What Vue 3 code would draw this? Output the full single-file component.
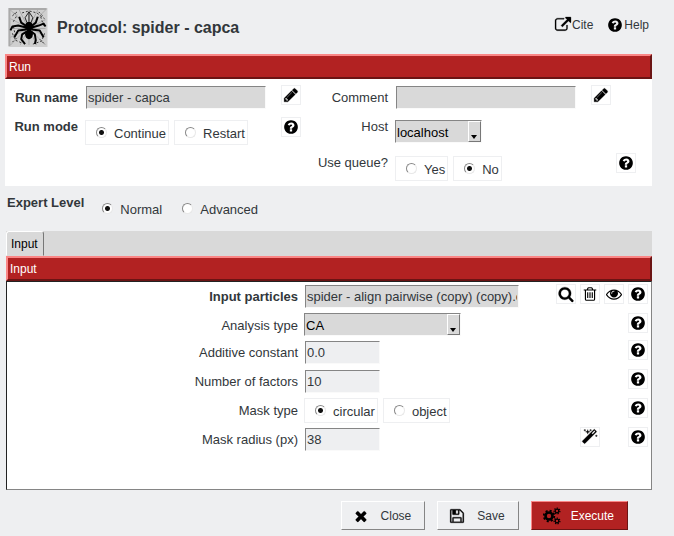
<script setup>
import { ref, reactive } from 'vue'

const icons = {
  help: 'M1024 1376v-192q0-14-9-23t-23-9h-192q-14 0-23 9t-9 23v192q0 14 9 23t23 9h192q14 0 23-9t9-23zm256-672q0-88-55.5-163t-138.5-116-170-41q-243 0-371 213-15 24 8 42l132 100q7 6 19 6 16 0 25-12 53-68 86-92 34-24 86-24 48 0 85.5 26t37.5 59q0 38-20 61t-68 45q-63 28-115.5 86.5t-52.5 125.5v36q0 14 9 23t23 9h192q14 0 23-9t9-23q0-19 21.5-49.5t54.5-49.5q32-18 49-28.5t46-35 44.5-48 28-60.5 12.5-81zm384 192q0 209-103 385.5t-279.5 279.5-385.5 103-385.5-103-279.5-279.5-103-385.5 103-385.5 279.5-279.5 385.5-103 385.5 103 279.5 279.5 103 385.5z',
  search: 'M1216 832q0-185-131.500-316.500t-316.500-131.500-316.500 131.500-131.500 316.500 131.500 316.500 316.500 131.500 316.500-131.500 131.500-316.500zm512 832q0 52-38 90t-90 38q-54 0-90-38l-343-342q-179 124-399 124-143 0-273.500-55.500t-225-150-150-225-55.500-273.500 55.500-273.500 150-225 225-150 273.500-55.500 273.500 55.500 225 150 150 225 55.500 273.500q0 220-124 399l343 343q37 37 37 90z',
  trash: 'M704 736v576q0 14-9 23t-23 9h-64q-14 0-23-9t-9-23v-576q0-14 9-23t23-9h64q14 0 23 9t9 23zm256 0v576q0 14-9 23t-23 9h-64q-14 0-23-9t-9-23v-576q0-14 9-23t23-9h64q14 0 23 9t9 23zm256 0v576q0 14-9 23t-23 9h-64q-14 0-23-9t-9-23v-576q0-14 9-23t23-9h64q14 0 23 9t9 23zm128 724v-948h-896v948q0 22 7 40.500t14.500 27 10.500 8.500h832q3 0 10.500-8.500t14.500-27 7-40.500zm-672-1076h448l-48-117q-7-9-17-11h-317q-10 2-17 11zm928 32v64q0 14-9 23t-23 9h-96v948q0 83-47 143.500t-113 60.500h-832q-66 0-113-58.500t-47-141.500v-952h-96q-14 0-23-9t-9-23v-64q0-14 9-23t23-9h309l70-167q15-37 54-63t79-26h320q40 0 79 26t54 63l70 167h309q14 0 23 9t9 23z',
  eye: 'M1664 960q-152-236-381-353 61 104 61 225 0 185-131.500 316.500t-316.500 131.500-316.500-131.500-131.500-316.500q0-121 61-225-229 117-381 353 133 205 333.500 326.500t434.500 121.500 434.500-121.500 333.500-326.500zm-720-384q0-20-14-34t-34-14q-125 0-214.500 89.500t-89.500 214.500q0 20 14 34t34 14 34-14 14-34q0-86 61-147t147-61q20 0 34-14t14-34zm848 384q0 34-20 69-140 230-376.500 368.500t-499.500 138.500-499.500-139-376.500-368q-20-35-20-69t20-69q140-229 376.500-368t499.500-139 499.500 139 376.500 368q20 35 20 69z',
  pencil: 'M491 1536l91-91-235-235-91 91v107h128v128h107zm523-928q0-22-22-22-10 0-17 7l-542 542q-7 7-7 17 0 22 22 22 10 0 17-7l542-542q7-7 7-17zm-54-192l416 416-832 832h-416v-416zm683 96q0 53-37 90l-166 166-416-416 166-165q36-38 90-38 53 0 91 38l235 234q37 39 37 91z',
  magic: 'M1190 581l293-293-107-107-293 293zm447-293q0 27-18 45l-1286 1286q-18 18-45 18t-45-18l-198-198q-18-18-18-45t18-45l1286-1286q18-18 45-18t45 18l198 198q18 18 18 45zM353 98l98 30-98 30-30 98-30-98-98-30 98-30 30-98zM703 260l196 60-196 60-60 196-60-196-196-60 196-60 60-196zM1633 738l98 30-98 30-30 98-30-98-98-30 98-30 30-98zM993 98l98 30-98 30-30 98-30-98-98-30 98-30 30-98z',
  close: 'M1490 1322q0 40-28 68l-136 136q-28 28-68 28t-68-28l-294-294-294 294q-28 28-68 28t-68-28l-136-136q-28-28-28-68t28-68l294-294-294-294q-28-28-28-68t28-68l136-136q28-28 68-28t68 28l294 294 294-294q28-28 68-28t68 28l136 136q28 28 28 68t-28 68l-294 294 294 294q28 28 28 68z',
  save: 'M512 1536h768v-384h-768v384zm896 0h128v-896q0-14-10-38.500t-20-34.500l-281-281q-10-10-34-20t-39-10v416q0 40-28 68t-68 28h-576q-40 0-68-28t-28-68v-416h-128v1280h128v-416q0-40 28-68t68-28h832q40 0 68 28t28 68v416zm-384-928v-320q0-13-9.500-22.500t-22.500-9.500h-192q-13 0-22.500 9.500t-9.500 22.500v320q0 13 9.500 22.500t22.500 9.500h192q13 0 22.500-9.500t9.500-22.500zm640 32v928q0 40-28 68t-68 28h-1344q-40 0-68-28t-28-68v-1344q0-40 28-68t68-28h928q40 0 88 20t76 48l280 280q28 28 48 76t20 88z',
  link: 'M1408 928v320q0 119-84.500 203.500t-203.500 84.500h-832q-119 0-203.500-84.500t-84.500-203.500v-832q0-119 84.500-203.500t203.500-84.500h704q14 0 23 9t9 23v64q0 14-9 23t-23 9h-704q-66 0-113 47t-47 113v832q0 66 47 113t113 47h832q66 0 113-47t47-113v-320q0-14 9-23t23-9h64q14 0 23 9t9 23zm384-864v512q0 26-19 45t-45 19-45-19l-176-176-652 652q-10 10-23 10t-23-10l-114-114q-10-10-10-23t10-23l652-652-176-176q-19-19-19-45t19-45 45-19h512q26 0 45 19t19 45z',
}

const runName = ref('spider - capca')
const comment = ref('')
const runMode = ref('Continue')
const queue = ref('No')
const level = ref('Normal')

const params = reactive([
  { id: 'particles', label: 'Input particles', type: 'pointer', value: 'spider - align pairwise (copy) (copy).outputParticles', actions: ['search', 'trash', 'eye', 'help'] },
  { id: 'analysis', label: 'Analysis type', type: 'select', value: 'CA', options: ['CA', 'PCA', 'IPCA'], actions: ['help'] },
  { id: 'constant', label: 'Additive constant', type: 'number', value: '0.0', actions: ['help'] },
  { id: 'factors', label: 'Number of factors', type: 'number', value: '10', actions: ['help'] },
  { id: 'mask', label: 'Mask type', type: 'radio', value: 'circular', options: ['circular', 'object'], actions: ['help'] },
  { id: 'radius', label: 'Mask radius (px)', type: 'number', value: '38', actions: ['magic', 'help'] },
])
</script>

<template>
  <main class="window">
    <header class="top">
      <svg class="logo" viewBox="0 0 40 40" aria-hidden="true">
        <rect width="40" height="40" fill="#cfcfcf" />
        <path d="M1 39V1H39" fill="none" stroke="#aaa" stroke-width="2" />
        <path class="web" d="M2 2L38 38M38 2L2 38M21 2V38M2 21H38M11 2L29 38M30 2L12 38M2 11L38 29M2 30L38 12" />
        <path class="web strong" d="M4 8L10 3M14 5L21 3L29 5L37 11M5 14L9 7M33 9L36 18M4 26L7 33L14 36M25 37L34 34L37 26M5 19L7 28M6 5L9 8M31 4L35 8M4 35L9 30M32 32L37 37" />
        <path class="legs" d="M19 19L13 15L11 9M18 20L10 18L4 19L2 23M18 22L10 23L6 30M19 24L14 27L13 32L17 37M23 19L28 15L30 9M24 20L31 18L36 16L38 19M24 22L32 23L36 30M23 24L27 27L28 33L27 37" />
        <path class="feelers" d="M19 15L17 10L21 4L25 10L23 15M21 4V14" />
        <ellipse cx="21" cy="27" rx="4" ry="5" />
        <ellipse cx="21" cy="19" rx="4" ry="5" />
      </svg>
      <h1>Protocol: spider - capca</h1>
      <nav class="links">
        <a href="#cite"><svg class="icon heavy" viewBox="0 0 1792 1792"><path :d="icons.link" /></svg>Cite</a>
        <a href="#help"><svg class="icon" viewBox="0 0 1792 1792"><path :d="icons.help" /></svg>Help</a>
      </nav>
    </header>

    <section class="run">
      <h2 class="bar">Run</h2>
      <div class="run-grid">
        <label class="label bold tall" for="run-name">Run name</label>
        <input id="run-name" v-model="runName" class="field grey" type="text">
        <div class="tools">
          <button class="tool" type="button" aria-label="Edit run name"><svg class="icon heavy" viewBox="0 0 1792 1792"><path :d="icons.pencil" /></svg></button>
        </div>
        <label class="label tall" for="comment">Comment</label>
        <input id="comment" v-model="comment" class="field grey" type="text">
        <div class="tools">
          <button class="tool" type="button" aria-label="Edit comment"><svg class="icon heavy" viewBox="0 0 1792 1792"><path :d="icons.pencil" /></svg></button>
          <span class="blank"></span>
        </div>

        <span id="run-mode" class="label bold">Run mode</span>
        <div class="radios drop" role="radiogroup" aria-labelledby="run-mode">
          <label v-for="o in ['Continue', 'Restart']" :key="o" class="radio"><input v-model="runMode" type="radio" name="mode" :value="o">{{ o }}</label>
        </div>
        <div class="tools">
          <button class="tool" type="button" aria-label="Run mode help"><svg class="icon" viewBox="0 0 1792 1792"><path :d="icons.help" /></svg></button>
        </div>
        <label class="label" for="host">Host</label>
        <div class="combo host drop">
          <select id="host"><option>localhost</option></select>
          <span class="arrow"></span>
        </div>
        <span></span>

        <span id="use-queue" class="label queue">Use queue?</span>
        <div class="radios drop" role="radiogroup" aria-labelledby="use-queue">
          <label v-for="o in ['Yes', 'No']" :key="o" class="radio"><input v-model="queue" type="radio" name="queue" :value="o">{{ o }}</label>
        </div>
        <div class="tools">
          <button class="tool" type="button" aria-label="Queue help"><svg class="icon" viewBox="0 0 1792 1792"><path :d="icons.help" /></svg></button>
        </div>
      </div>
    </section>

    <div class="level">
      <span id="level" class="label bold">Expert Level</span>
      <div class="radios plain" role="radiogroup" aria-labelledby="level">
        <label v-for="o in ['Normal', 'Advanced']" :key="o" class="radio"><input v-model="level" type="radio" name="level" :value="o">{{ o }}</label>
      </div>
    </div>

    <section class="params">
      <div class="tabs" role="tablist"><button class="tab" type="button" role="tab" aria-selected="true">Input</button></div>
      <h2 class="bar">Input</h2>
      <div class="panel">
        <div v-for="p in params" :key="p.id" class="row">
          <span v-if="p.type === 'radio'" :id="p.id" class="label tall">{{ p.label }}</span>
          <label v-else class="label tall" :class="{ bold: p.type === 'pointer' }" :for="p.id">{{ p.label }}</label>

          <div v-if="p.type === 'select'" class="combo analysis">
            <select :id="p.id" v-model="p.value"><option v-for="o in p.options" :key="o">{{ o }}</option></select>
            <span class="arrow"></span>
          </div>
          <div v-else-if="p.type === 'radio'" class="radios" role="radiogroup" :aria-labelledby="p.id">
            <label v-for="o in p.options" :key="o" class="radio"><input v-model="p.value" type="radio" :name="p.id" :value="o">{{ o }}</label>
          </div>
          <input v-else :id="p.id" v-model="p.value" class="field" :class="p.type === 'pointer' ? 'grey long' : 'short'" type="text">

          <div class="slots">
            <button v-for="a in p.actions" :key="a" class="tool" :class="'at-' + a" type="button" :aria-label="p.label + ' ' + a">
              <svg class="icon" :class="{ heavy: a === 'search' || a === 'magic' }" viewBox="0 0 1792 1792"><path :d="icons[a]" /></svg>
            </button>
          </div>
        </div>
      </div>
    </section>

    <footer class="buttons">
      <button class="btn" type="button"><svg class="icon heavy" viewBox="0 0 1792 1792"><path :d="icons.close" /></svg>Close</button>
      <button class="btn" type="button"><svg class="icon heavy" viewBox="0 0 1792 1792"><path :d="icons.save" /></svg>Save</button>
      <button class="btn primary" type="button">
        <svg class="icon cogs" viewBox="0 0 18 18">
          <g fill="none" stroke="#000">
            <circle cx="6" cy="9" r="3.500" stroke-width="2.600" />
            <circle cx="6" cy="9" r="5.300" stroke-width="1.800" stroke-dasharray="2.080 2.080" />
            <circle cx="14" cy="4" r="1.800" stroke-width="1.300" />
            <circle cx="14" cy="4" r="2.900" stroke-width="1.200" stroke-dasharray="1.300 1.300" />
            <circle cx="14" cy="14" r="1.800" stroke-width="1.300" />
            <circle cx="14" cy="14" r="2.900" stroke-width="1.200" stroke-dasharray="1.300 1.300" />
          </g>
        </svg>Execute
      </button>
    </footer>
  </main>
</template>

<style>
body {
  background: #eeeff1;
}
</style>

<style scoped>
.window {
  box-sizing: border-box;
  padding: 8px 22px 6px 5px;
  color: #32373b;
  font: 13px/20px "Liberation Sans", Arial, sans-serif;
}
button,
input,
select {
  box-sizing: border-box;
  margin: 0;
  font: inherit;
  color: inherit;
}
.icon {
  width: 16px;
  height: 16px;
  flex: none;
  fill: #000;
}
.heavy {
  overflow: visible;
  stroke: #000;
  stroke-width: 30;
}
.top {
  display: flex;
  align-items: flex-start;
  height: 46px;
  padding-left: 3px;
}
.logo {
  width: 40px;
  height: 39px;
}
.web {
  fill: none;
  stroke: #888;
  stroke-width: 0.5;
}
.strong {
  stroke: #333;
  stroke-width: 1;
  stroke-dasharray: 2 2;
}
.legs {
  fill: none;
  stroke: #000;
  stroke-width: 2;
  stroke-linejoin: round;
}
.feelers {
  fill: none;
  stroke: #222;
  stroke-width: 1;
}
h1 {
  flex: 1;
  margin: 0 0 0 9px;
  font-size: 16px;
  line-height: 39px;
}
.links {
  display: flex;
  gap: 14px;
  padding: 7px 3px 0 0;
  font-size: 12px;
}
.links a {
  display: flex;
  align-items: center;
  gap: 1px;
  color: inherit;
  text-decoration: none;
}
.bar {
  box-sizing: border-box;
  height: 25px;
  margin: 0;
  padding: 0 2px;
  border: 2px solid;
  border-color: #fa8686 #6b1414 #6b1414 #fa8686;
  background: #b22222;
  color: #fff;
  font-size: 12px;
  font-weight: 400;
  line-height: 22px;
}
.run-grid {
  display: grid;
  grid-template-columns: 73px 1fr 27px 79px 1fr 52px;
  column-gap: 8px;
  row-gap: 8px;
  align-items: start;
  padding: 6px 16px 5px 0;
  background: #fff;
}
.label {
  text-align: right;
  white-space: nowrap;
}
.bold {
  font-weight: 700;
}
.tall {
  line-height: 25px;
}
.run-grid .tall {
  margin-bottom: -1px;
}
.queue {
  grid-column: 4;
}
.drop {
  margin-top: 3px;
}
.field {
  height: 23px;
  width: 100%;
  margin-top: 1px;
  padding: 0 1px;
  border: 1px solid;
  border-color: #858585 #fafafa #fafafa #858585;
  border-radius: 0;
  background: #eeeff1;
}
.grey {
  background: #d9d9d9;
}
.long {
  max-width: 214px;
}
.short {
  max-width: 75px;
}
.tools {
  display: flex;
  justify-content: flex-end;
  gap: 5px;
}
.blank {
  width: 20px;
}
.tool {
  display: flex;
  align-items: center;
  justify-content: center;
  width: 20px;
  height: 20px;
  padding: 0;
  border: 1px solid #eeeff1;
  background: #fff;
}
.radios {
  display: flex;
  gap: 5px;
  margin-left: -1px;
}
.radio {
  box-sizing: border-box;
  display: flex;
  align-items: center;
  height: 25px;
  padding: 3px 2px 0 10px;
  border: 1px solid #eeeff1;
}
.radio input {
  appearance: none;
  width: 11px;
  height: 11px;
  margin: 0 7px 4px 0;
  border: 1px solid;
  border-color: #888 #e8e8e8 #e8e8e8 #888;
  border-radius: 50%;
  background: #fff;
}
.radio input:checked {
  background: radial-gradient(circle, #111 2px, #fff 3px);
}
.combo {
  position: relative;
  height: 23px;
  margin-left: -1px;
}
.combo select {
  display: block;
  width: 100%;
  height: 100%;
  padding: 2px 16px 0 1px;
  appearance: none;
  border: 1px solid;
  border-color: #858585 #fafafa #fafafa #858585;
  border-radius: 0;
  background: #d9d9d9;
  color: #000;
}
.host {
  width: 87px;
}
.analysis {
  width: 157px;
}
.arrow {
  position: absolute;
  top: 1px;
  right: 1px;
  bottom: 1px;
  box-sizing: border-box;
  width: 13px;
  border: 1px solid;
  border-color: #fff #777 #777 #fff;
  background: #d9d9d9;
  pointer-events: none;
}
.arrow::after {
  content: "";
  position: absolute;
  bottom: 2px;
  left: 2px;
  border: 3px solid transparent;
  border-top: 4px solid #000;
  border-bottom: 0;
}
.level {
  display: flex;
  padding: 7px 2px 0;
  height: 38px;
}
.plain {
  gap: 0;
  margin: 3px 0 0 7px;
}
.plain .radio {
  border-color: transparent;
  padding-right: 8px;
}
.params {
  margin-left: 1px;
}
.tabs {
  display: flex;
  height: 25px;
  background: #d9d9d9;
}
.tab {
  padding: 0 5px 0 4px;
  border: 1px solid;
  border-color: #fff #777 transparent #fff;
  border-radius: 3px 3px 0 0;
  background: #d9d9d9;
  color: #000;
  font-size: 12px;
}
.panel {
  display: grid;
  grid-template-rows: 24px 22px 24px 24px 24px 24px;
  gap: 5px;
  padding: 2px 3px 38px 0;
  border: 1px solid;
  border-color: #222 #858585 #858585 #222;
  background: #fff;
}
.row {
  display: grid;
  grid-template-columns: 291fr 244fr 92px;
  column-gap: 7px;
  align-items: start;
}
.slots {
  display: grid;
  grid-template-columns: repeat(4, 20px);
  column-gap: 4px;
}
.at-search {
  grid-column: 1;
}
.at-trash,
.at-magic {
  grid-column: 2;
}
.at-eye {
  grid-column: 3;
}
.at-help {
  grid-column: 4;
}
.buttons {
  display: flex;
  justify-content: flex-end;
  gap: 12px;
  padding: 11px 24px 0 0;
}
.btn {
  display: flex;
  align-items: center;
  gap: 12px;
  height: 29px;
  padding: 0 13px 0 11px;
  border: 1px solid;
  border-color: #fff #858585 #858585 #fff;
  background: #eeeff1;
  font-size: 12px;
}
.primary {
  gap: 10px;
  border-color: #fa8686 #6b1414 #6b1414 #fa8686;
  background: #b22222;
  color: #fff;
}
.cogs {
  width: 18px;
  height: 18px;
}
</style>
